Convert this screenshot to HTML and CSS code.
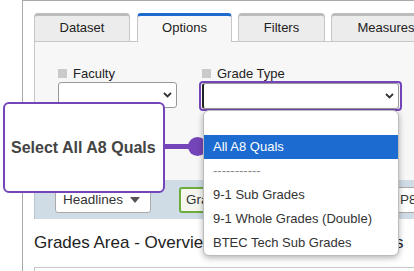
FILE: index.html
```html
<!DOCTYPE html>
<html lang="en">
<head>
    <meta charset="UTF-8">
    <meta name="viewport" content="width=device-width, initial-scale=1.0">
    <title>Options - Grade Type</title>
    <link rel="stylesheet" href="styles.css">
</head>
<body>
    <div class="frame">
        <!-- Tabs -->
        <div class="tabs">
            <div class="tab tab-dataset">Dataset</div>
            <div class="tab tab-options active">Options</div>
            <div class="tab tab-filters">Filters</div>
            <div class="tab tab-measures">Measures</div>
        </div>

        <div class="pane">
            <div class="field field-faculty">
                <div class="label"><span class="box"></span>Faculty</div>
                <div class="select">
                    <svg width="9" height="6" viewBox="0 0 9 6"><polyline points="1,1 4.5,4.5 8,1" fill="none" stroke="#333" stroke-width="1.8"/></svg>
                </div>
            </div>
            <div class="field field-grade">
                <div class="label"><span class="box"></span>Grade Type</div>
                <div class="highlight">
                    <div class="select select-focus">
                        <svg width="9" height="6" viewBox="0 0 9 6"><polyline points="1,1 4.5,4.5 8,1" fill="none" stroke="#333" stroke-width="1.8"/></svg>
                    </div>
                </div>
            </div>
        </div>

        <div class="toolbar">
            <div class="btn btn-menu">Headlines
                <svg width="10" height="6" viewBox="0 0 10 6"><polygon points="0,0 10,0 5,6" fill="#555"/></svg>
            </div>
            <div class="btn btn-active">Grades</div>
            <div class="btn btn-p8">P8</div>
        </div>

        <h2 class="heading">Grades Area - Overview of All Subjects &amp; Grades</h2>
        <div class="results"></div>
    </div>

    <!-- Walkthrough hint -->
    <div class="callout">Select All A8 Quals</div>
    <div class="connector"></div>
    <div class="connector-dot"></div>

    <ul class="dropdown">
        <li></li>
        <li class="selected">All A8 Quals</li>
        <li class="divider">-----------</li>
        <li>9-1 Sub Grades</li>
        <li>9-1 Whole Grades (Double)</li>
        <li>BTEC Tech Sub Grades</li>
    </ul>
</body>
</html>
```

FILE: styles.css
```css
body {
    margin: 0;
    width: 414px;
    height: 271px;
    overflow: hidden;
    position: relative;
    background-color: #fff;
    font-family: "Liberation Sans", Arial, sans-serif;
    color: #333;
}
.frame {
    margin-left: 22px;
    width: 388px;
    height: 258px;
    padding: 12px 0 0 11px;
    border: 1px solid #a9a9a9;
    border-bottom: none;
    overflow: hidden;
}

/* tabs */
.tabs {
    display: flex;
    height: 28px;
}
.tab {
    flex: none;
    box-sizing: border-box;
    height: 28px;
    margin-right: 6px;
    border: 1px solid #c6c6c6;
    border-top: 3px solid #bcbcbc;
    border-bottom: none;
    border-radius: 4px 4px 0 0;
    background-color: #ececec;
    font-size: 13px;
    line-height: 24px;
    text-align: center;
    color: #222;
}
.tab-dataset { width: 96px; margin-right: 7px; }
.tab-options { width: 95px; }
.tab-filters { width: 87px; }
.tab-measures { width: 110px; }
.tab.active {
    height: 29px;
    margin-bottom: -1px;
    position: relative;
    z-index: 1;
    background-color: #f7f7f7;
    border-top-color: #1d6bcc;
}

.pane {
    box-sizing: border-box;
    height: 139px;
    display: flex;
    gap: 22px;
    padding: 24px 0 0 23px;
    border: 1px solid #c6c6c6;
    border-right: none;
    border-bottom: none;
    background-color: #f7f7f7;
}
.field-faculty { width: 119px; }
.field-grade { width: 203px; }
.label {
    display: flex;
    align-items: center;
    gap: 6px;
    height: 14px;
    margin-bottom: 2px;
    font-size: 13px;
    color: #222;
}
.field-grade .label {
    padding-left: 3px;
}
.box {
    width: 9px;
    height: 9px;
    background-color: #cacaca;
}
.select {
    box-sizing: border-box;
    height: 26px;
    display: flex;
    align-items: center;
    justify-content: flex-end;
    padding-right: 4px;
    border: 1px solid #999;
    border-radius: 3px;
    background-color: #fff;
}
.highlight {
    margin-top: -1px;
    padding: 0 1px;
    border: 2px solid #7445b8;
    border-radius: 4px;
}
.select-focus {
    border-left: 2px solid #222;
}

/* toolbar */
.toolbar {
    box-sizing: border-box;
    width: 420px;
    height: 39px;
    display: flex;
    align-items: center;
    padding-left: 20px;
    border-left: 1px solid #b8c4cc;
    background-color: #cfdbe5;
}
.btn {
    flex: none;
    box-sizing: border-box;
    height: 26px;
    display: flex;
    align-items: center;
    padding: 0 7px;
    border: 1px solid #aaa;
    border-radius: 3px;
    background-color: #fff;
    font-size: 13.5px;
    color: #333;
}
.btn-menu {
    width: 96px;
    gap: 7px;
}
.btn-active {
    width: 110px;
    margin-left: 28px;
    padding-left: 5px;
    border: 2px solid #6cad3d;
    background-color: #f5f6f0;
}
.btn-p8 {
    margin-left: 103px;
    width: 40px;
}

.heading {
    margin: 0;
    height: 48px;
    line-height: 48px;
    font-size: 17px;
    font-weight: normal;
    white-space: nowrap;
    color: #222;
}
.results {
    height: 3px;
    border-top: 1px solid #c6c6c6;
    border-left: 1px solid #c6c6c6;
}

/* hint overlay */
.callout {
    position: absolute;
    left: 3px;
    top: 102px;
    box-sizing: border-box;
    width: 162px;
    height: 91px;
    display: flex;
    align-items: center;
    padding-left: 6px;
    border: 2px solid #7445b8;
    border-radius: 6px;
    background-color: #fff;
    font-size: 16px;
    font-weight: bold;
    color: #444;
}
.connector {
    position: absolute;
    left: 165px;
    top: 144px;
    width: 30px;
    height: 5px;
    background-color: #7445b8;
}
.connector-dot {
    position: absolute;
    left: 188px;
    top: 137px;
    width: 19px;
    height: 19px;
    border-radius: 50%;
    background-color: #7445b8;
}

.dropdown {
    position: absolute;
    left: 203px;
    top: 110px;
    box-sizing: border-box;
    width: 196px;
    margin: 0;
    padding: 0;
    list-style: none;
    border: 1px solid #bbb;
    border-radius: 6px;
    background-color: #fff;
    box-shadow: 0 2px 6px rgba(0, 0, 0, 0.3);
    overflow: hidden;
    font-size: 13px;
    color: #333;
}
.dropdown li {
    height: 24px;
    line-height: 24px;
    padding-left: 9px;
    white-space: nowrap;
}
.dropdown .selected {
    background-color: #1b6bd0;
    color: #fff;
}
.dropdown .divider {
    color: #888;
}
```
